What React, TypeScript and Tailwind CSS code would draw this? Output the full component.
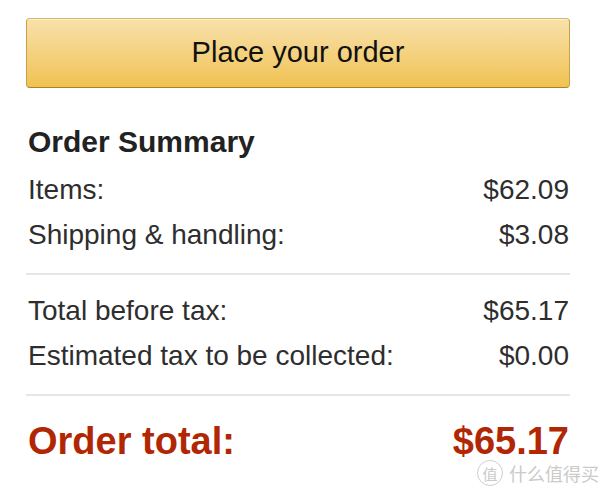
import React from 'react';

const rowsTop = [
    { label: 'Items:', value: '$62.09' },
    { label: 'Shipping & handling:', value: '$3.08' },
];

const rowsBottom = [
    { label: 'Total before tax:', value: '$65.17' },
    { label: 'Estimated tax to be collected:', value: '$0.00' },
];

const Row: React.FC<{ label: string; value: string }> = ({ label, value }) => (
    <div className="flex justify-between pl-[2px] pr-[1px] text-[28px] leading-[45px] text-[#2e2e2e]">
        <span>{label}</span>
        <span>{value}</span>
    </div>
);

export default function App() {
    return (
        <div className="relative w-[600px] h-[490px] overflow-hidden bg-white font-['Liberation_Sans',Arial,sans-serif]">
            <div className="ml-[26px] w-[544px] pt-[18px]">
                <button className="flex h-[70px] w-full items-center justify-center rounded-[4px] border border-[#c9a043] border-t-[#d9b563] border-b-[#a9842f] bg-linear-to-b from-[#f8e1aa] to-[#f0c24f] text-[29px] text-[#111] shadow-[inset_0_1px_0_rgba(255,255,255,0.55)]">
                    Place your order
                </button>

                <h3 className="mt-[36px] pl-[2px] text-[30px] font-bold leading-[36px] text-[#222]">Order Summary</h3>

                <div className="mt-[7px]">
                    {rowsTop.map(r => <Row key={r.label} {...r} />)}
                </div>

                <div className="mt-[16px] h-[2px] bg-[#e6e6e6]"></div>

                <div className="pt-[13px]">
                    {rowsBottom.map(r => <Row key={r.label} {...r} />)}
                </div>

                <div className="mt-[16px] h-[2px] bg-[#e6e6e6]"></div>

                <div className="mt-[21px] flex justify-between pl-[2px] pr-[1px] text-[38px] font-bold leading-[48px] text-[#b12704]">
                    <span>Order total:</span>
                    <span>$65.17</span>
                </div>
            </div>

            {/* watermark */}
            <div className="absolute left-[477px] top-[460px] flex items-center gap-[6px] text-[#cacaca]">
                <div className="flex h-[26px] w-[26px] items-center justify-center rounded-full border-[1.5px] border-[#cfcfcf] text-[15px] leading-none font-['Noto_Sans_CJK_SC',sans-serif]">值</div>
                <span className="text-[18px] leading-none font-['Noto_Sans_CJK_SC',sans-serif]">什么值得买</span>
            </div>
        </div>
    );
}
